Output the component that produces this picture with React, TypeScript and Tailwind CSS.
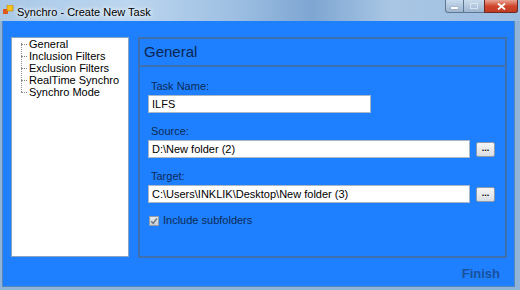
import React from "react";

const font = { fontFamily: '"Liberation Sans", Arial, sans-serif' };

function TitleIcon() {
  return (
    <svg width="11" height="10" viewBox="0 0 11 10">
      <rect x="0" y="4" width="5" height="5" fill="#e2571d" />
      <rect x="4" y="0" width="6" height="6" fill="#f6c21c" stroke="#b07a10" strokeWidth="0.6" />
    </svg>
  );
}

function CaptionButtons() {
  return (
    <div className="absolute right-[2px] top-0 flex h-[13px]">
      <div className="flex w-[19px] items-center justify-center rounded-bl-[3px] border border-t-0 border-[#5d7895] bg-gradient-to-b from-[#c9dbee] to-[#9eb6d0]">
        <div className="mt-[3px] h-[2px] w-[7px] bg-white shadow-[0_0_1px_#234]" />
      </div>
      <div className="flex w-[20px] items-center justify-center border-b border-[#5d7895] bg-gradient-to-b from-[#c9dbee] to-[#9eb6d0]">
        <div className="h-[6px] w-[8px] border border-[#e8f0f8] opacity-70" />
      </div>
      <div className="flex w-[34px] items-center justify-center rounded-br-[3px] border border-t-0 border-[#6b2a22] bg-gradient-to-b from-[#e8a493] via-[#d0462c] to-[#c13b23]">
        <svg width="9" height="7" viewBox="0 0 9 7">
          <path d="M1 0.5 L8 6.5 M8 0.5 L1 6.5" stroke="white" strokeWidth="1.8" />
        </svg>
      </div>
    </div>
  );
}

function TextField({ value, w }: { value: string; w: string }) {
  return (
    <div
      className={`${w} flex h-[18px] items-center border border-[#a9b7c9] bg-white pl-[3px] text-[11px] leading-none text-black`}
    >
      {value}
    </div>
  );
}

function BrowseButton() {
  return (
    <div className="ml-[6px] flex h-[15px] w-[19px] items-center justify-center rounded-[2px] border border-[#8c9aab] bg-gradient-to-b from-[#f6f6f6] to-[#d9dde2]">
      <span className="text-[9px] font-bold leading-none text-black" style={{ marginTop: -2 }}>
        ...
      </span>
    </div>
  );
}

export default function App() {
  const treeItems = ["General", "Inclusion Filters", "Exclusion Filters", "RealTime Synchro", "Synchro Mode"];
  return (
    <div className="relative flex h-[290px] w-[520px] flex-col overflow-hidden bg-[#8fb4d8]" style={font}>
      {/* title bar */}
      <div className="relative h-[21px] shrink-0 bg-[linear-gradient(90deg,#a9c8e6_0%,#bcd6ef_25%,#9ebfe2_45%,#7ea6d2_60%,#a9c6e4_75%,#9dbde0_100%)]">
        <div className="absolute left-[3px] top-[5px]">
          <TitleIcon />
        </div>
        <div className="absolute left-[17px] top-[4px] text-[11px] text-black [text-shadow:0_0_6px_#ffffff,0_0_4px_#ffffff]">
          Synchro - Create New Task
        </div>
        <CaptionButtons />
      </div>
      {/* client */}
      <div className="mb-[3px] ml-[2px] mr-[5px] flex flex-1 flex-col border border-t-0 border-[#5b86b8] bg-[#1f80ff]">
        <div className="ml-[8px] mt-[16px] flex">
          {/* tree */}
          <div className="relative h-[220px] w-[118px] border border-[#8ea3bd] bg-white">
            <div className="absolute left-[9px] top-[5px] h-[49px] border-l border-dotted border-[#8a8a8a]" />
            <div className="flex flex-col pl-[17px] pt-0">
              {treeItems.map((t) => (
                <div key={t} className="relative flex h-[12px] items-center text-[11px] leading-none text-black">
                  <div className="absolute left-[-8px] top-[6px] w-[6px] border-t border-dotted border-[#8a8a8a]" />
                  {t}
                </div>
              ))}
            </div>
          </div>
          {/* panel */}
          <div className="ml-[9px] flex h-[221px] w-[369px] flex-col border-2 border-[#3f6fae]">
            <div className="flex h-[28px] items-center border-b-2 border-[#3f6fae] pl-[4px] text-[15px] text-[#0a2550]">
              General
            </div>
            <div className="flex flex-col pl-[8px] pt-[13px]">
              <div className="pl-[3px] text-[11px] leading-[13px] text-[#0c2a55]">Task Name:</div>
              <div className="mt-[2px]">
                <TextField value="ILFS" w="w-[223px]" />
              </div>
              <div className="mt-[12px] pl-[3px] text-[11px] leading-[13px] text-[#0c2a55]">Source:</div>
              <div className="mt-[2px] flex items-center">
                <TextField value="D:\New folder (2)" w="w-[322px]" />
                <BrowseButton />
              </div>
              <div className="mt-[12px] pl-[3px] text-[11px] leading-[13px] text-[#0c2a55]">Target:</div>
              <div className="mt-[2px] flex items-center">
                <TextField value="C:\Users\INKLIK\Desktop\New folder (3)" w="w-[322px]" />
                <BrowseButton />
              </div>
              <div className="mt-[12px] flex items-center pl-[1px]">
                <div className="flex h-[10px] w-[10px] items-center justify-center border border-[#8e9cab] bg-gradient-to-b from-[#e4e8ec] to-[#c9d0d7]">
                  <svg width="8" height="8" viewBox="0 0 8 8">
                    <path d="M1.2 4.2 L3.2 6.3 L6.8 1.5" stroke="#6a7480" strokeWidth="1.4" fill="none" />
                  </svg>
                </div>
                <span className="ml-[4px] text-[11px] leading-none text-[#0c2a55]">Include subfolders</span>
              </div>
            </div>
          </div>
        </div>
        <div className="mr-[14px] mt-[6px] flex justify-end">
          <span className="text-[13px] font-bold text-[#18519c]">Finish</span>
        </div>
      </div>
    </div>
  );
}
